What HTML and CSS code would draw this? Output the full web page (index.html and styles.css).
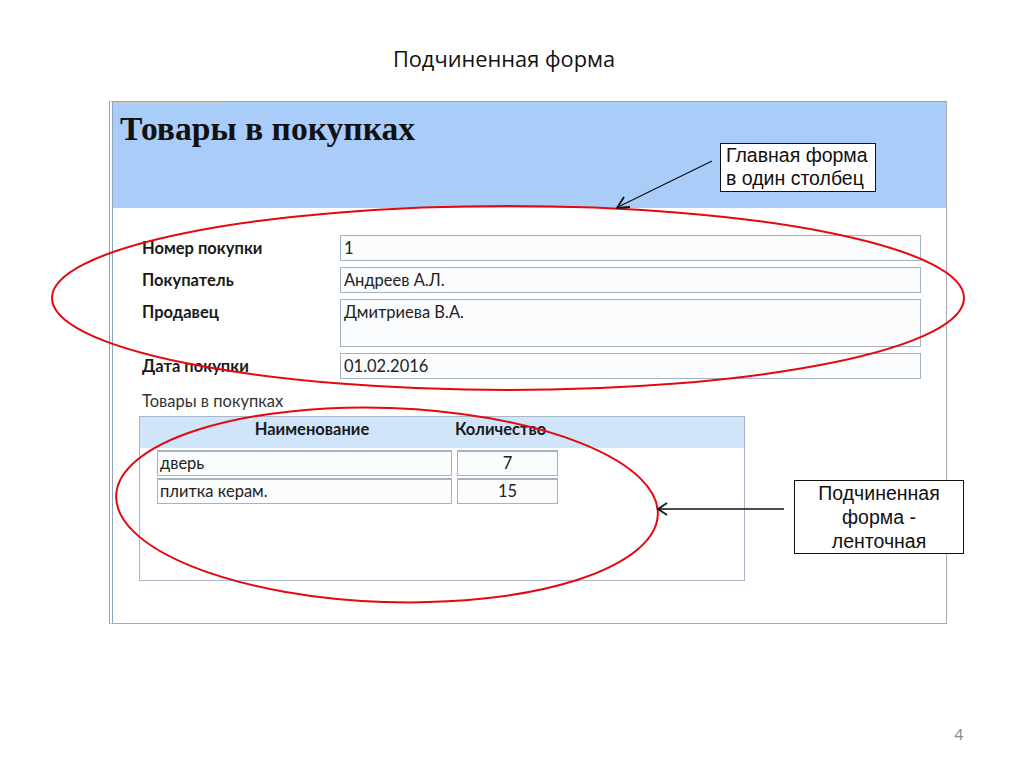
FILE: index.html
```html
<!DOCTYPE html>
<html lang="ru">
<head>
<meta charset="utf-8">
<title>Подчиненная форма</title>
<link rel="stylesheet" href="styles.css">
</head>
<body>
<div class="page">
  <h1 class="slide-title">Подчиненная форма</h1>

  <div class="form">
    <div class="form-header">
      <div class="tab"></div>
      <div class="form-title">Товары в покупках</div>
    </div>
    <div class="form-body">
      <div class="fields">
        <div class="label">Номер покупки</div>
        <div class="field">1</div>
        <div class="label">Покупатель</div>
        <div class="field">Андреев А.Л.</div>
        <div class="label">Продавец</div>
        <div class="field tall">Дмитриева В.А.</div>
        <div class="label">Дата покупки</div>
        <div class="field">01.02.2016</div>
      </div>
      <div class="sub-label">Товары в покупках</div>
      <div class="subform">
        <div class="sub-head">
          <div class="head-name">Наименование</div>
          <div class="head-qty">Количество</div>
        </div>
        <div class="sub-rows">
          <div class="sub-row">
            <div class="cell name">дверь</div>
            <div class="cell qty">7</div>
          </div>
          <div class="sub-row">
            <div class="cell name">плитка керам.</div>
            <div class="cell qty">15</div>
          </div>
        </div>
      </div>
    </div>
  </div>

  <svg class="overlay" width="1024" height="768" viewBox="0 0 1024 768" aria-hidden="true">
    <ellipse cx="508" cy="298" rx="456" ry="92" fill="none" stroke="#e3090f" stroke-width="2"/>
    <ellipse cx="387" cy="505" rx="271" ry="97" transform="rotate(2 387 505)" fill="none" stroke="#e3090f" stroke-width="2"/>
    <line x1="712" y1="161" x2="618" y2="207" stroke="#111" stroke-width="1.3"/>
    <path d="M624 197 L617 208 L630 207" fill="none" stroke="#111" stroke-width="1.8"/>
    <line x1="784" y1="509" x2="659" y2="509" stroke="#111" stroke-width="1.3"/>
    <path d="M667 503 L658 509 L667 515" fill="none" stroke="#111" stroke-width="1.8"/>
  </svg>

  <div class="callout callout-main">Главная форма<br>в один столбец</div>
  <div class="callout callout-sub">Подчиненная<br>форма -<br>ленточная</div>

  <div class="page-num">4</div>
</div>
</body>
</html>
```
FILE: styles.css
```css
* { box-sizing: border-box; }

html, body {
  margin: 0;
  padding: 0;
  background: #ffffff;
}

.page {
  position: relative;
  width: 1024px;
  height: 768px;
  padding-top: 44px;
  overflow: hidden;
  font-family: Lato, "Noto Sans", sans-serif;
  color: #222;
}

.slide-title {
  margin: 0;
  height: 30px;
  line-height: 30px;
  font-family: "Open Sans", sans-serif;
  font-weight: 400;
  font-size: 21.8px;
  color: #111;
  text-align: center;
  padding-right: 16px;
}

.form {
  margin: 27px 0 0 109px;
  width: 838px;
  height: 523px;
  border-top: 1px solid #93a8bd;
  border-left: 4px double #8ea5bc;
  border-right: 1px solid #a9a9a9;
  border-bottom: 1px solid #a9a9a9;
  background: #ffffff;
}

.form-header {
  height: 106px;
  background: #a9cdf8;
}

.tab {
  width: 109px;
  height: 2px;
  background: #c7cbcf;
}

.form-title {
  margin-top: 5px;
  padding-left: 7px;
  font-family: "Liberation Serif", serif;
  font-weight: 700;
  font-size: 33.6px;
  line-height: 40px;
  color: #111;
}

.form-body {
  padding: 27px 0 0 29px;
}

.fields {
  display: grid;
  grid-template-columns: 198px 581px;
  row-gap: 6px;
}

.label {
  font-weight: 700;
  font-size: 16.5px;
  line-height: 26px;
  color: #1a1a1a;
}

.field {
  height: 26px;
  border: 1px solid #a2b2c3;
  background: #fbfcfd;
  padding-left: 3px;
  font-size: 16.5px;
  line-height: 24px;
  color: #222;
}

.field.tall {
  height: 48px;
}

.sub-label {
  margin-top: 12px;
  font-size: 16.5px;
  line-height: 20px;
  color: #333;
}

.subform {
  margin: 5px 0 0 -3px;
  width: 606px;
  height: 165px;
  border: 1px solid #a7b7c7;
}

.sub-head {
  display: flex;
  height: 31px;
  background: #d0e4fa;
  padding-left: 17px;
  font-weight: 700;
  font-size: 16.5px;
  line-height: 24px;
  color: #1a1a1a;
}

.head-name {
  width: 298px;
  padding-left: 12px;
  text-align: center;
}

.head-qty {
  padding-left: 0;
}

.sub-rows {
  display: flex;
  flex-direction: column;
  gap: 2px;
  padding: 2px 0 0 17px;
}

.sub-row {
  display: flex;
  gap: 5px;
}

.cell {
  height: 26px;
  border: 1px solid #a3b3c3;
  border-top-width: 2px;
  background: #fbfcfd;
  font-size: 16.5px;
  line-height: 22px;
  color: #222;
}

.cell.name {
  width: 295px;
  padding-left: 2px;
}

.cell.qty {
  width: 101px;
  text-align: center;
}

.overlay {
  position: absolute;
  left: 0;
  top: 0;
  pointer-events: none;
}

.callout {
  position: absolute;
  border: 1.5px solid #111;
  background: #ffffff;
  font-family: "Liberation Sans", Arial, sans-serif;
  font-size: 19.5px;
  color: #111;
}

.callout-main {
  left: 720px;
  top: 143px;
  width: 156px;
  height: 49px;
  line-height: 23px;
  padding-left: 5px;
}

.callout-sub {
  left: 794px;
  top: 480px;
  width: 170px;
  height: 74px;
  line-height: 24px;
  text-align: center;
}

.page-num {
  position: absolute;
  left: 952px;
  top: 724px;
  width: 14px;
  font-size: 16px;
  line-height: 20px;
  color: #8a8a8a;
  text-align: center;
}
```
